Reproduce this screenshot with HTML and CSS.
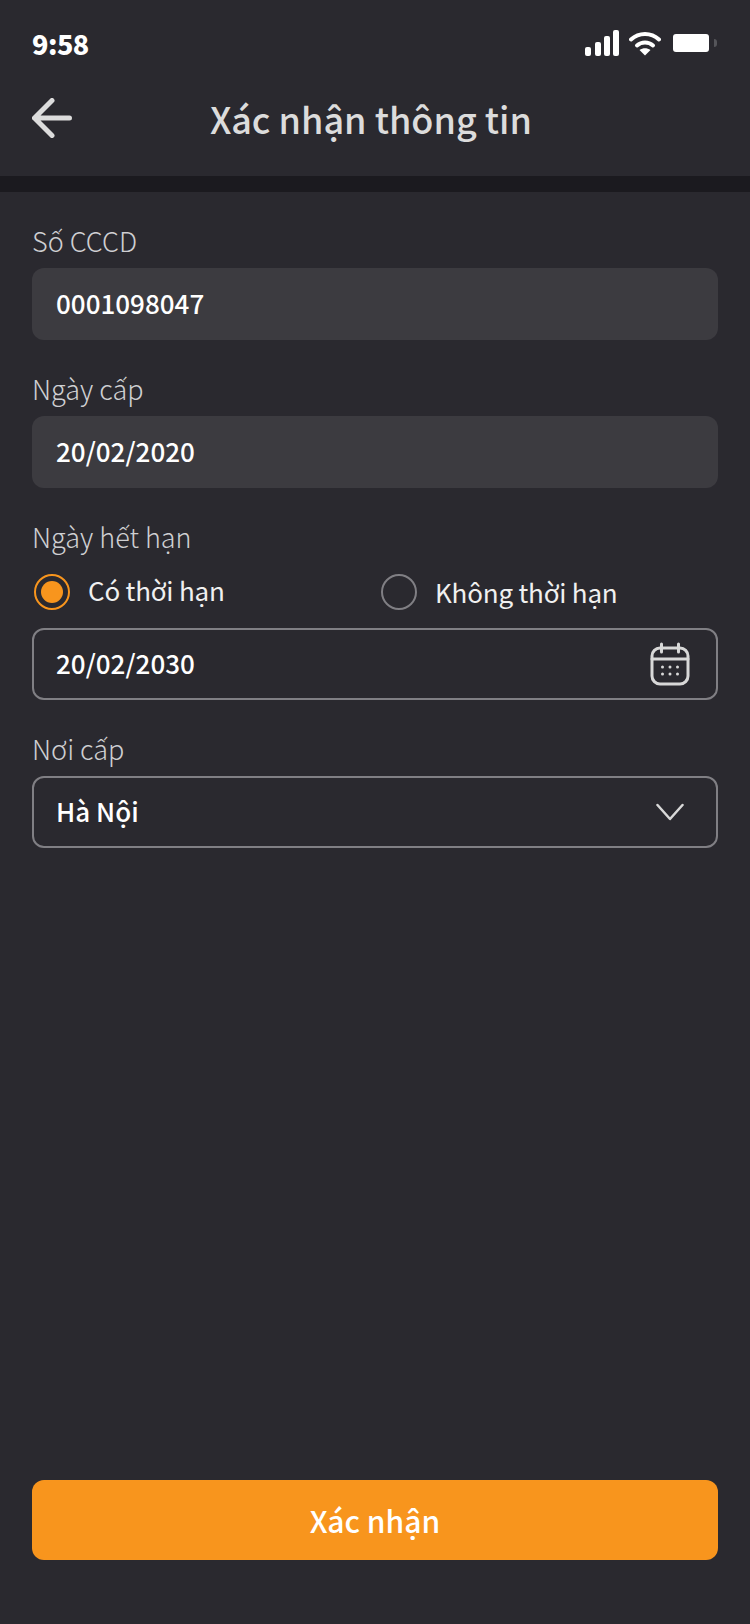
FILE: index.html
```html
<!DOCTYPE html>
<html lang="vi">
<head>
<meta charset="utf-8">
<title>Xác nhận thông tin</title>
<link rel="stylesheet" href="styles.css">
</head>
<body>
<div class="screen">
  <div class="status">
    <span class="time">9:58</span>
    <div class="status-icons">
      <svg class="signal" width="36" height="26" viewBox="0 0 36 26"><rect x="1" y="17" width="6" height="9" rx="2"/><rect x="11" y="12" width="6" height="14" rx="2"/><rect x="20" y="6" width="6" height="20" rx="2"/><rect x="29" y="0" width="6" height="26" rx="2"/></svg>
      <svg class="wifi" width="32" height="26" viewBox="0 0 32 26"><path d="M2 9.5C10 2 22 2 30 9.5" fill="none" stroke="#fff" stroke-width="4" stroke-linecap="round"/><path d="M8 15.5C12.500 11.500 19.500 11.500 24 15.500" fill="none" stroke="#fff" stroke-width="4" stroke-linecap="round"/><path d="M10.500 20C14 17.500 18 17.500 21.500 20L16 25.500Z" fill="#fff"/></svg>
      <div class="battery"><div class="battery-body"></div><div class="battery-cap"></div></div>
    </div>
  </div>
  <header class="nav">
    <svg class="back" width="40" height="40" viewBox="0 0 40 40"><path d="M37.500 20H2.500M20 2.500 2.500 20 20 37.500" fill="none" stroke="#dcdcdc" stroke-width="5" stroke-linecap="round" stroke-linejoin="round"/></svg>
    <h1 class="title">Xác nhận thông tin</h1>
  </header>
  <div class="divider"></div>
  <main class="form">
    <section class="group">
      <label class="label">Số CCCD</label>
      <div class="field filled"><span class="value">0001098047</span></div>
    </section>
    <section class="group">
      <label class="label">Ngày cấp</label>
      <div class="field filled"><span class="value">20/02/2020</span></div>
    </section>
    <section class="group">
      <label class="label">Ngày hết hạn</label>
      <div class="radios">
        <div class="radio-item first"><span class="radio on"><span class="dot"></span></span><span class="radio-text up">Có thời hạn</span></div>
        <div class="radio-item"><span class="radio"></span><span class="radio-text">Không thời hạn</span></div>
      </div>
      <div class="field outlined">
        <span class="value">20/02/2030</span>
        <svg class="cal" width="40" height="44" viewBox="0 0 40 44" fill="none" stroke="#d8d8d8" stroke-width="3" stroke-linecap="round"><rect x="2" y="6" width="36" height="36" rx="8"/><path d="M2 17H38M11.500 2V10M28.500 2V10"/><g fill="#d8d8d8" stroke="none"><circle cx="12.500" cy="25" r="1.500"/><circle cx="20" cy="25" r="1.500"/><circle cx="27.500" cy="25" r="1.500"/><circle cx="12.500" cy="32" r="1.500"/><circle cx="20" cy="32" r="1.500"/><circle cx="27.500" cy="32" r="1.500"/></g></svg>
      </div>
    </section>
    <section class="group">
      <label class="label">Nơi cấp</label>
      <div class="field outlined">
        <span class="value">Hà Nội</span>
        <svg class="chev" width="28" height="18" viewBox="0 0 28 18"><path d="M1.500 2 14 16 26.500 2" fill="none" stroke="#d8d8d8" stroke-width="2.500" stroke-linecap="round" stroke-linejoin="round"/></svg>
      </div>
    </section>
  </main>
  <button class="submit">Xác nhận</button>
</div>
</body>
</html>
```
FILE: styles.css
```css
* { box-sizing: border-box; }
html, body { margin: 0; padding: 0; background: #2a292f; }
body { font-family: "Noto Sans CJK JP", "Noto Sans", sans-serif; }
.screen { width: 750px; height: 1624px; display: flex; flex-direction: column; background: #2a292f; overflow: hidden; padding-bottom: 64px; }
.status { height: 80px; padding: 25px 32px 0; display: flex; justify-content: space-between; align-items: flex-start; }
.time { font-size: 27px; line-height: 38px; font-weight: 900; color: #fff; letter-spacing: -0.5px; }
.status-icons { display: flex; align-items: flex-start; margin-top: 5px; margin-right: 1px; }
.signal { fill: #fff; }
.wifi { margin-left: 9px; }
.battery { display: flex; align-items: center; margin-left: 12px; height: 26px; }
.battery-body { width: 36px; height: 18px; background: #fff; border-radius: 3px; }
.battery-cap { width: 3px; height: 8px; background: #55555a; border-radius: 0 3px 3px 0; margin-left: 5px; }
.nav { height: 96px; position: relative; display: flex; align-items: flex-start; justify-content: center; padding-right: 8px; }
.back { position: absolute; left: 32px; top: 18px; }
.title { margin: 12px 0 0; font-size: 36px; line-height: 52px; font-weight: 500; color: #dcdcdc; }
.divider { height: 16px; background: #1b1a1f; }
.form { padding: 40px 32px 0; display: flex; flex-direction: column; gap: 40px; }
.group { display: flex; flex-direction: column; }
.label { display: block; height: 36px; font-size: 27px; line-height: 18px; color: #cfcfd2; font-weight: 300; }
.field { height: 72px; border-radius: 12px; display: flex; align-items: center; justify-content: space-between; padding: 0 24px; }
.filled { background: #3c3b40; }
.outlined { border: 2px solid #807f84; padding: 0 22px; }
.value { font-size: 26px; line-height: 36px; font-weight: 500; color: #fff; margin-top: -3px; }
.radios { display: flex; margin-top: 10px; margin-bottom: 18px; }
.radio-item { display: flex; align-items: center; gap: 18px; padding-left: 2px; }
.radio-item.first { width: 347px; }
.radio { width: 36px; height: 36px; border-radius: 50%; border: 2px solid #807f84; display: flex; align-items: center; justify-content: center; flex: none; }
.radio.on { border-color: #f8951d; }
.dot { width: 22px; height: 22px; border-radius: 50%; background: #f8951d; }
.radio-text { font-size: 26px; line-height: 36px; color: #f0f0f0; letter-spacing: -0.2px; font-weight: 400; margin-top: -1px; }
.radio-text.up { margin-top: -5px; }
.cal { margin-right: 4px; }
.chev { margin-right: 10px; }
.submit { margin: auto 32px 0; height: 80px; border: 0; border-radius: 12px; background: #f8951d; color: #fff; font-family: inherit; font-size: 30px; font-weight: 500; padding: 0; }
```
